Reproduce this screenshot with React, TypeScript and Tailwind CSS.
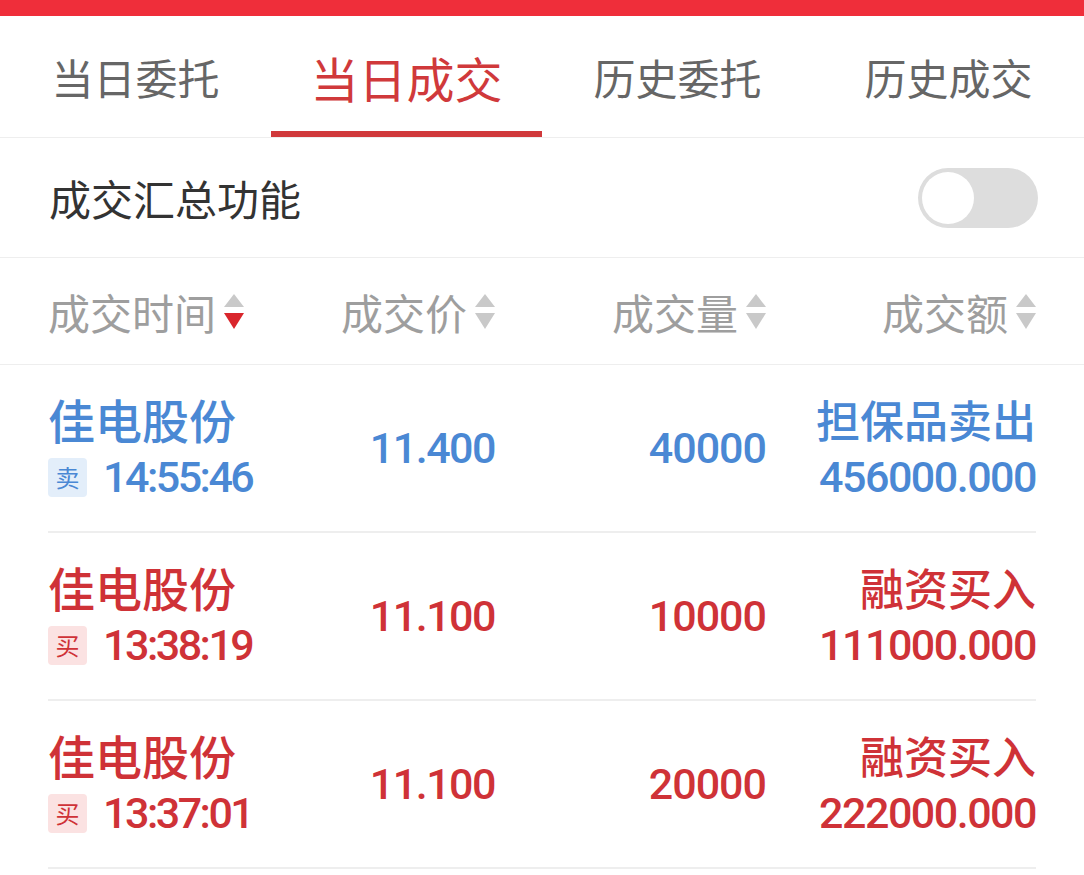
import React from 'react';

const CJK = "font-['Noto_Sans_CJK_SC','Noto_Sans',sans-serif]";
const NUM = "font-['Roboto','Noto_Sans_CJK_SC',sans-serif]";

type Trade = {
    name: string;
    side: '买' | '卖';
    time: string;
    price: string;
    qty: string;
    kind: string;
    amount: string;
};

const trades: Trade[] = [
    { name: '佳电股份', side: '卖', time: '14:55:46', price: '11.400', qty: '40000', kind: '担保品卖出', amount: '456000.000' },
    { name: '佳电股份', side: '买', time: '13:38:19', price: '11.100', qty: '10000', kind: '融资买入', amount: '111000.000' },
    { name: '佳电股份', side: '买', time: '13:37:01', price: '11.100', qty: '20000', kind: '融资买入', amount: '222000.000' },
];

const tabs = ['当日委托', '当日成交', '历史委托', '历史成交'];

const SortIcon = ({ down }: { down?: boolean }) => (
    <svg width="20" height="35" viewBox="0 0 20 35" className="ml-[8px] shrink-0">
        <polygon points="10,0 20,13 0,13" fill="#c9c9c9" />
        <polygon points="0,19 20,19 10,35" fill={down ? '#d9262c' : '#c9c9c9'} />
    </svg>
);

export default function App() {
    return (
        <div className={`w-[1084px] h-[875px] bg-white overflow-hidden ${CJK}`}>
            <div className="h-[16px] bg-[#ef2e3a]" />

            {/* Tabs */}
            <div className="flex h-[122px] border-b border-[#eeeeee]">
                {tabs.map((t, i) => (
                    <div key={t} className="relative flex-1 flex items-center justify-center">
                        {i === 1 ? (
                            <span className="text-[48px] leading-none text-[#d0393b]">{t}</span>
                        ) : (
                            <span className="text-[42px] leading-none text-[#666666]">{t}</span>
                        )}
                        {i === 1 && <div className="absolute left-0 right-0 bottom-0 h-[6px] bg-[#d0393b]" />}
                    </div>
                ))}
            </div>

            {/* Summary switch */}
            <div className="flex items-center justify-between h-[120px] pl-[49px] pr-[46px] border-b border-[#eeeeee]">
                <span className="text-[42px] text-[#333333]">成交汇总功能</span>
                <div className="w-[120px] h-[60px] rounded-full bg-[#dddddd] flex items-center px-[4px]">
                    <div className="w-[52px] h-[52px] rounded-full bg-white" />
                </div>
            </div>

            {/* Header */}
            <div className="h-[107px] px-[48px] border-b border-[#eeeeee] grid grid-cols-[220px_227px_271px_1fr] items-center text-[42px] text-[#9e9e9e]">
                <div className="flex items-center">成交时间<SortIcon down /></div>
                <div className="flex items-center justify-end">成交价<SortIcon /></div>
                <div className="flex items-center justify-end">成交量<SortIcon /></div>
                <div className="flex items-center justify-end">成交额<SortIcon /></div>
            </div>

            {/* Rows */}
            {trades.map((r, i) => {
                const sell = r.side === '卖';
                const color = sell ? 'text-[#4a88d4]' : 'text-[#cf3237]';
                return (
                    <div key={i} className="px-[48px]">
                        <div className={`h-[168px] border-b-2 border-[#eeeeee] grid grid-cols-[220px_227px_271px_1fr] items-center ${color}`}>
                            <div className="flex flex-col">
                                <span className="text-[47px] font-medium leading-[58px]">{r.name}</span>
                                <div className="flex items-center h-[58px] gap-[16px]">
                                    <span className={`w-[39px] h-[39px] rounded-[4px] flex items-center justify-center text-[24px] ${sell ? 'bg-[#e3eefa]' : 'bg-[#fbe2e2]'}`}>
                                        {r.side}
                                    </span>
                                    <span className={`${NUM} text-[43px] font-medium tracking-[-2.5px]`}>{r.time}</span>
                                </div>
                            </div>
                            <div className={`${NUM} text-right text-[43px] font-medium tracking-[-1.5px]`}>{r.price}</div>
                            <div className={`${NUM} text-right text-[43px] font-medium tracking-[-1px]`}>{r.qty}</div>
                            <div className="flex flex-col items-end">
                                <span className="text-[44px] font-medium leading-[58px]">{r.kind}</span>
                                <span className={`${NUM} text-[43px] font-medium leading-[58px] tracking-[-1.5px]`}>{r.amount}</span>
                            </div>
                        </div>
                    </div>
                );
            })}
        </div>
    );
}
